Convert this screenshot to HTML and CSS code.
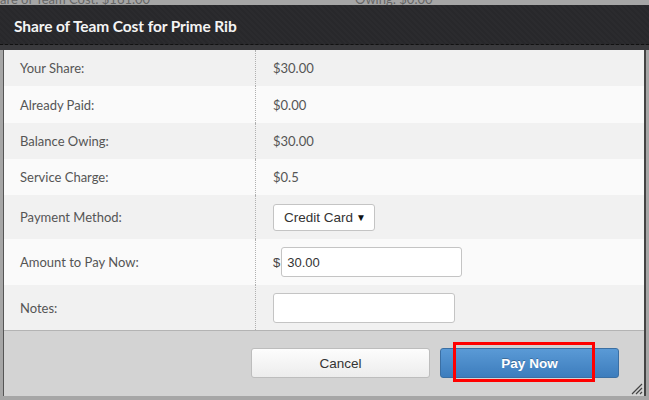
FILE: index.html
```html
<!DOCTYPE html>
<html>
<head>
<meta charset="utf-8">
<link rel="stylesheet" href="styles.css">
</head>
<body>
<div class="behind">
  <span class="behind-left">are of Team Cost: $161.00</span>
  <span class="behind-right">Owing: $0.00</span>
</div>
<div class="dialog">
  <div class="titlebar"><span class="title">Share of Team Cost for Prime Rib</span></div>
  <div class="band"></div>
  <div class="content">
    <div class="rows">
      <div class="row r1 odd"><div class="label">Your Share:</div><div class="value">$30.00</div></div>
      <div class="row r2 even"><div class="label">Already Paid:</div><div class="value">$0.00</div></div>
      <div class="row r3 odd"><div class="label">Balance Owing:</div><div class="value">$30.00</div></div>
      <div class="row r4 even"><div class="label">Service Charge:</div><div class="value">$0.5</div></div>
      <div class="row r5 odd"><div class="label">Payment Method:</div><div class="value"><div class="select"><span>Credit Card</span><span class="arrow">&#9660;</span></div></div></div>
      <div class="row r6 even"><div class="label">Amount to Pay Now:</div><div class="value"><span class="dollar">$</span><div class="input amount">30.00</div></div></div>
      <div class="row r7 odd"><div class="label">Notes:</div><div class="value"><div class="input notes"></div></div></div>
    </div>
    <div class="footer">
      <div class="btn cancel">Cancel</div>
      <div class="btn pay">Pay Now</div>
      <div class="highlight"></div>
      <svg class="grip" width="13" height="13" viewBox="0 0 13 13"><path d="M12 2 L2 12 M12 6 L6 12 M12 10 L10 12" stroke="#444" stroke-width="1.2" fill="none"/></svg>
    </div>
  </div>
</div>
</body>
</html>
```
FILE: styles.css
```css
html, body {
  margin: 0;
  padding: 0;
}
body {
  width: 649px;
  height: 400px;
  overflow: hidden;
  background: #a6a6a6;
  position: relative;
  font-family: Lato, "Open Sans", sans-serif;
}
.behind {
  height: 5px;
  overflow: hidden;
  position: relative;
  font-family: Lato, sans-serif;
  font-size: 13px;
  color: #666;
  line-height: 4px;
}
.behind-left { position: absolute; left: 0; top: -3px; }
.behind-right { position: absolute; left: 355px; top: -3px; }
.dialog {
  position: absolute;
  left: 0;
  top: 5px;
  width: 649px;
  height: 391px;
  display: flex;
  flex-direction: column;
}
.titlebar {
  height: 40px;
  border-bottom: 1px dashed #111;
  background: repeating-linear-gradient(45deg, #2b2b2e 0 2px, #28282b 2px 4px);
  display: flex;
  align-items: center;
  padding-left: 14px;
  padding-top: 2px;
  box-sizing: border-box;
}
.title {
  color: #f4f4f4;
  font-family: Lato, sans-serif;
  font-weight: 700;
  font-size: 15.5px;
  letter-spacing: -0.1px;
}
.band {
  height: 5px;
  background: #3a3a3d;
}
.content {
  margin: 0 3px 0 3px;
  border-left: 1px solid #555;
  border-right: 2px solid #444;
  flex: 1;
  display: flex;
  flex-direction: column;
}
.rows {
  display: flex;
  flex-direction: column;
}
.row {
  display: grid;
  grid-template-columns: 252px 1fr;
  font-size: 13px;
  color: #555;
}
.odd { background: #f1f1f1; }
.even { background: #fafafa; }
.r1 { height: 36px; }
.r2 { height: 37px; }
.r3 { height: 36px; }
.r4 { height: 36px; }
.r5 { height: 44px; }
.r6 { height: 46px; }
.r7 { height: 45px; }
.label {
  padding-left: 16px;
  border-right: 1px dotted #b0b0b0;
  display: flex;
  align-items: center;
}
.value {
  padding-left: 17px;
  display: flex;
  align-items: center;
}
.select {
  width: 102px;
  height: 27px;
  box-sizing: border-box;
  border: 1px solid #c4c4c4;
  border-radius: 3px;
  background: #fff;
  font-family: "Liberation Sans", Arial, sans-serif;
  font-size: 13.5px;
  color: #333;
  display: flex;
  align-items: center;
  justify-content: space-between;
  padding: 0 8px 0 10px;
}
.arrow {
  font-size: 10px;
  color: #111;
}
.dollar {
  font-family: "Liberation Sans", Arial, sans-serif;
  font-size: 13px;
  color: #444;
  margin-right: 1px;
}
.input {
  height: 30px;
  box-sizing: border-box;
  border: 1px solid #c4c4c4;
  border-radius: 3px;
  background: #fff;
  font-family: "Liberation Sans", Arial, sans-serif;
  font-size: 13px;
  color: #333;
  display: flex;
  align-items: center;
  padding-left: 5px;
}
.amount { width: 181px; }
.notes { width: 182px; }
.footer {
  flex: 1;
  background: #d3d3d3;
  border-top: 1px solid #b3b3b3;
  position: relative;
  display: flex;
  align-items: flex-start;
  padding: 17px 0 0 247px;
  gap: 10px;
}
.btn {
  width: 179px;
  height: 30px;
  box-sizing: border-box;
  border-radius: 3px;
  display: flex;
  align-items: center;
  justify-content: center;
  font-family: "Liberation Sans", Arial, sans-serif;
  font-size: 13.5px;
}
.cancel {
  background: linear-gradient(#fdfdfd, #ececec);
  border: 1px solid #bdbdbd;
  color: #333;
}
.pay {
  background: linear-gradient(#5a9ad6, #3d7dbd);
  border: 1px solid #3b6fa3;
  color: #fff;
  font-weight: 700;
  text-shadow: 0 -1px 0 rgba(0, 0, 0, 0.25);
}
.highlight {
  position: absolute;
  left: 449px;
  top: 11px;
  width: 142px;
  height: 40px;
  box-sizing: border-box;
  border: 3px solid #f00;
}
.grip {
  position: absolute;
  right: 1px;
  bottom: 1px;
}
```
